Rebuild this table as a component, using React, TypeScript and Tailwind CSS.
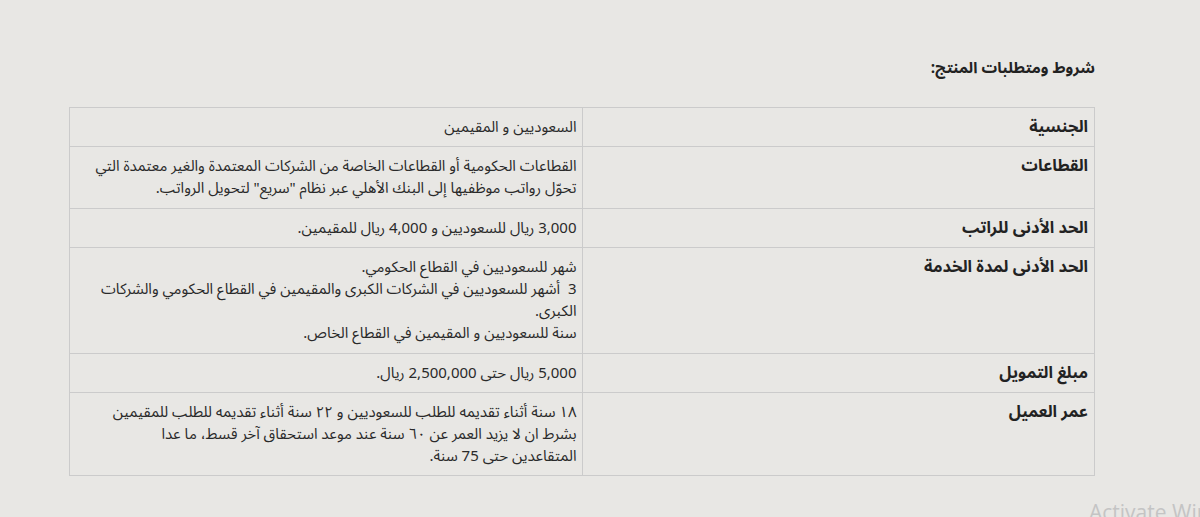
import React from "react";

const rows: { label: string; value: React.ReactNode }[] = [
  { label: "الجنسية", value: "السعوديين و المقيمين" },
  {
    label: "القطاعات",
    value:
      'القطاعات الحكومية أو القطاعات الخاصة من الشركات المعتمدة والغير معتمدة التي تحوّل رواتب موظفيها إلى البنك الأهلي عبر نظام "سريع" لتحويل الرواتب.',
  },
  { label: "الحد الأدنى للراتب", value: "3,000 ريال للسعوديين و 4,000 ريال للمقيمين." },
  {
    label: "الحد الأدنى لمدة الخدمة",
    value: (
      <>
        شهر للسعوديين في القطاع الحكومي.
        <br />3&nbsp; أشهر للسعوديين في الشركات الكبرى والمقيمين في القطاع الحكومي والشركات الكبرى.
        <br />
        سنة للسعوديين و المقيمين في القطاع الخاص.
      </>
    ),
  },
  { label: "مبلغ التمويل", value: "5,000 ريال حتى 2,500,000 ريال." },
  {
    label: "عمر العميل",
    value: (
      <>
        ١٨ سنة أثناء تقديمه للطلب للسعوديين و ٢٢ سنة أثناء تقديمه للطلب للمقيمين بشرط ان لا يزيد العمر عن ٦٠ سنة عند موعد استحقاق آخر قسط، ما عدا
        <br />
        المتقاعدين حتى 75 سنة.
      </>
    ),
  },
];

export default function App() {
  return (
    <div className="relative w-[1200px] h-[517px] overflow-hidden bg-[#e8e7e4] text-[#2b2b2b] font-['Noto_Sans_Arabic','DejaVu_Sans',sans-serif]">
      <div dir="rtl" className="w-[1026px] ml-[69px] pt-[55px]">
        <h3 className="h-[52px] text-[15.5px] font-bold leading-[26px] text-[#222]">شروط ومتطلبات المنتج:</h3>
        <table className="w-full table-fixed border-collapse border border-[#cbcbcb]">
          <tbody>
            {rows.map((r, i) => (
              <tr key={i} className="border-t border-[#cbcbcb]">
                <td className="w-1/2 border-l border-[#cbcbcb] px-[6px] pt-[8px] pb-[8.4px] align-top text-[16.4px] font-bold leading-[22px] text-[#222]">
                  {r.label}
                </td>
                <td className="w-1/2 px-[5px] pt-[8px] pb-[8.4px] align-top text-[15px] leading-[22px] text-[#2a2a2a]">
                  {r.value}
                </td>
              </tr>
            ))}
          </tbody>
        </table>
      </div>
      <div className="absolute left-[1089px] top-[497px] whitespace-nowrap font-['Open_Sans',sans-serif] text-[21px] text-[#c4c4c4]">
        Activate Windows
      </div>
    </div>
  );
}
